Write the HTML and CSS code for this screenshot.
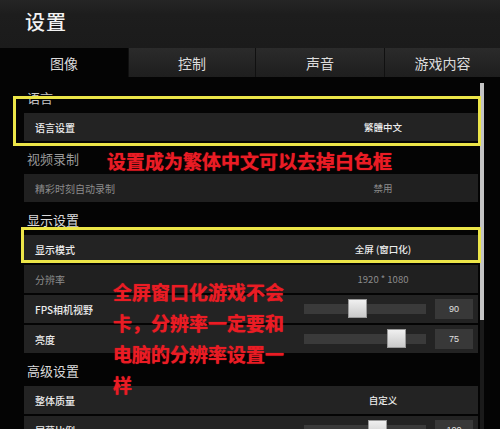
FILE: index.html
```html
<!DOCTYPE html>
<html lang="zh-CN">
<head>
<meta charset="utf-8">
<title>设置</title>
<link rel="stylesheet" href="styles.css">
</head>
<body>
<div class="app">
  <header class="topbar"><h1 class="title">设置</h1></header>
  <nav class="tabs">
    <div class="tab tab-active">图像</div>
    <div class="tab tab-2">控制</div>
    <div class="tab tab-3">声音</div>
    <div class="tab tab-4">游戏内容</div>
  </nav>
  <main class="content">
    <div class="list">
      <div class="section first">语言</div>
      <div class="row"><span class="label">语言设置</span><span class="val">繁體中文</span></div>

      <div class="section dim">视频录制</div>
      <div class="row disabled"><span class="label">精彩时刻自动录制</span><span class="val">禁用</span></div>

      <div class="section">显示设置</div>
      <div class="row"><span class="label">显示模式</span><span class="val">全屏 (窗口化)</span></div>
      <div class="row disabled"><span class="label">分辨率</span><span class="val">1920 * 1080</span></div>
      <div class="row"><span class="label">FPS相机视野</span><span class="slider"><span class="knob" style="left:44px"></span></span><span class="num">90</span></div>
      <div class="row"><span class="label">亮度</span><span class="slider"><span class="knob" style="left:83px"></span></span><span class="num">75</span></div>

      <div class="section">高级设置</div>
      <div class="row"><span class="label">整体质量</span><span class="val">自定义</span></div>
      <div class="row"><span class="label">屏幕比例</span><span class="slider"><span class="knob" style="left:64px"></span></span><span class="num">100</span></div>
    </div>
    <div class="scrollbar"><div class="scroll-thumb"></div></div>

    <div class="mark mark-lang"></div>
    <div class="mark mark-mode"></div>
    <div class="note note-1">设置成为繁体中文可以去掉白色框</div>
    <div class="note note-2">全屏窗口化游戏不会<br>卡，分辨率一定要和<br>电脑的分辨率设置一<br>样</div>
  </main>
</div>
</body>
</html>
```

FILE: styles.css
```css
* { box-sizing: border-box; }
html, body {
  margin: 0;
  padding: 0;
  background: #040404;
}
body {
  font-family: "Noto Sans CJK SC", "Noto Sans", sans-serif;
  color: #e6e6e6;
}
.app {
  width: 500px;
  height: 429px;
  overflow: hidden;
  display: flex;
  flex-direction: column;
  background: #040404;
}
.topbar {
  height: 48px;
  flex: none;
  background: linear-gradient(#252525, #1d1d1d 30%, #1b1b1b);
  padding-left: 25px;
  display: flex;
  align-items: center;
}
.title {
  margin: 0;
  font-size: 20px;
  font-weight: 500;
  color: #f2f2f2;
  line-height: 20px;
  letter-spacing: 1px;
  position: relative;
  top: -2px;
}
.tabs {
  height: 29px;
  flex: none;
  display: flex;
}
.tab {
  display: flex;
  align-items: center;
  justify-content: center;
  font-size: 14px;
  color: #dcdcdc;
  background: linear-gradient(#2b2b2b, #232323 60%, #1e1e1e);
  border-left: 1px solid #101010;
}
.tab-active {
  width: 128px;
  background: #040404;
  border-left: none;
}
.tab-2 { width: 127px; }
.tab-3 { width: 129px; }
.tab-4 { width: 116px; }

.content {
  flex: 1;
  display: flex;
  position: relative;
  padding-top: 5px;
}
.list {
  width: 478px;
  padding-left: 24px;
  display: flex;
  flex-direction: column;
}
.section {
  height: 31px;
  line-height: 31px;
  padding-left: 3px;
  font-size: 13px;
  color: #dadada;
}
.section.first { color: #c8c8c8; }
.section.dim { color: #9a9a9a; }
.row {
  height: 28px;
  flex: none;
  margin-bottom: 2px;
  background: #232323;
  display: flex;
  align-items: center;
  padding-left: 11px;
  font-size: 10px;
  font-weight: 500;
  color: #ececec;
}
.row.disabled { color: #8c8c8c; background: #202020; font-weight: 400; }
.label { flex: 1; }
.val {
  width: 170px;
  margin-right: 10px;
  text-align: center;
  font-size: 9.5px;
}
.slider {
  width: 122px;
  height: 10px;
  margin-right: 9px;
  background: #3a3a3a;
  position: relative;
}
.knob {
  position: absolute;
  top: -5px;
  width: 19px;
  height: 19px;
  background: linear-gradient(#f0f0f0, #c9c9c9);
  border: 1px solid #9a9a9a;
}
.num {
  width: 38px;
  height: 20px;
  margin-right: 5px;
  background: #383838;
  display: flex;
  align-items: center;
  justify-content: center;
  font-family: "Liberation Sans", "Noto Sans", sans-serif;
  font-size: 9px;
  color: #e0e0e0;
}
.scrollbar {
  width: 4px;
  margin-left: 2px;
  margin-top: 1px;
  background: #1a1a1a;
  align-self: stretch;
}
.scroll-thumb {
  height: 237px;
  background: #c4c4c4;
}

.mark {
  position: absolute;
  border: 3px solid #ece548;
}
.mark-lang {
  left: 13px;
  top: 19px;
  width: 468px;
  height: 50px;
}
.mark-mode {
  left: 21px;
  top: 150px;
  width: 460px;
  height: 36px;
}
.note {
  position: absolute;
  color: #ea1c24;
  font-weight: 700;
  font-size: 19px;
  white-space: nowrap;
  text-shadow: 0 0 1px #ea1c24;
}
.note-1 {
  left: 107px;
  top: 74px;
  line-height: 20px;
}
.note-2 {
  left: 113px;
  top: 199px;
  line-height: 31px;
}
```
